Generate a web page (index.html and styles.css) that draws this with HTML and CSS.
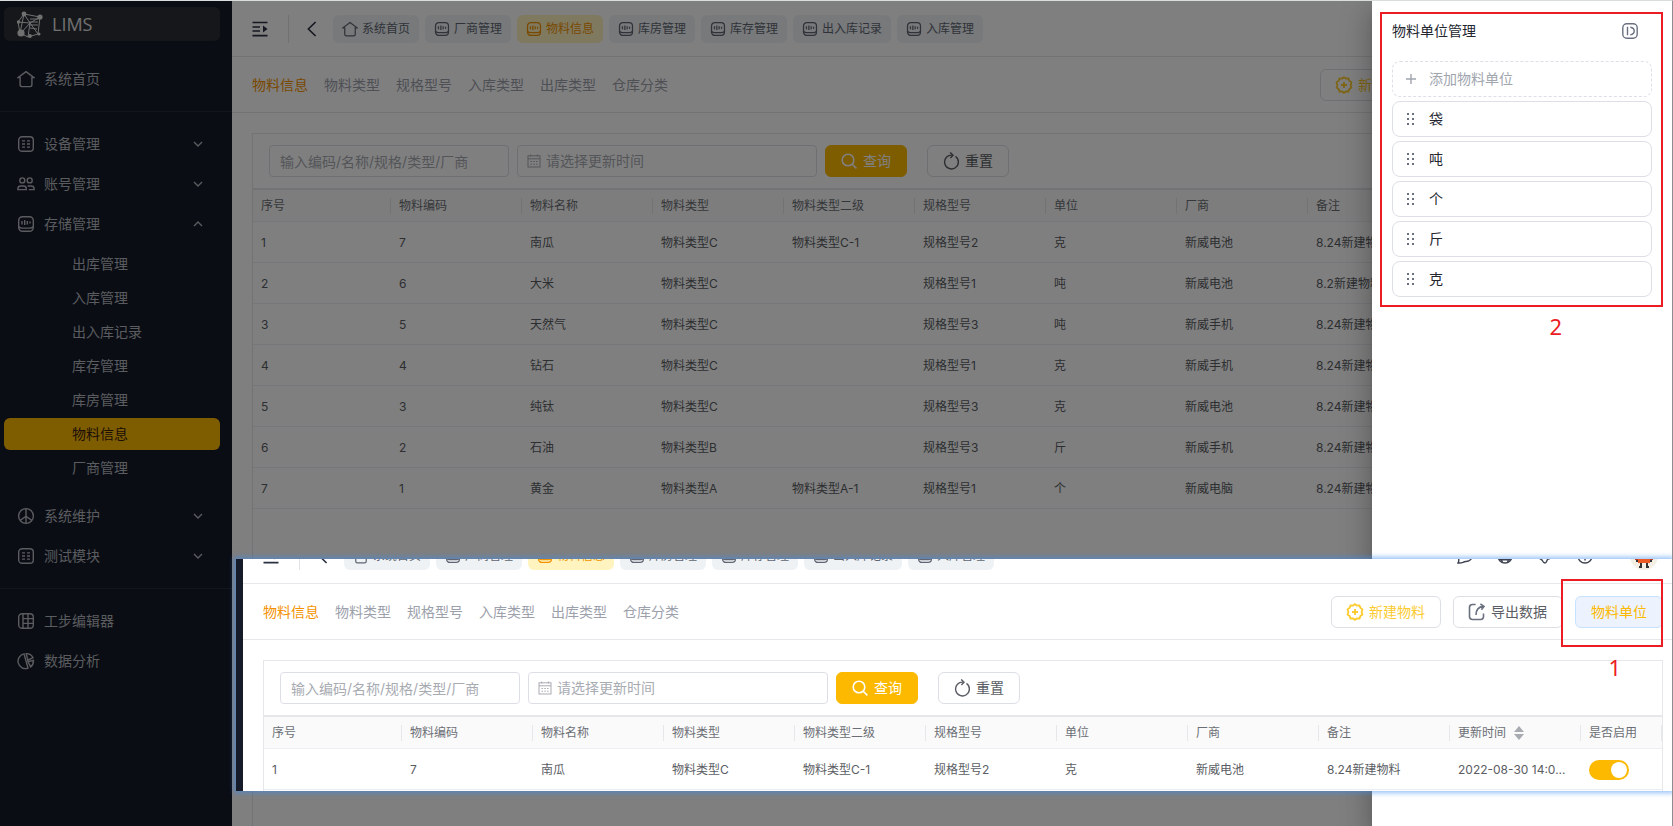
FILE: index.html
```html
<!DOCTYPE html>
<html lang="zh-CN">
<head>
<meta charset="utf-8">
<title>LIMS</title>
<link rel="stylesheet" href="styles.css">
</head>
<body>
<svg class="sprite" aria-hidden="true">
  <symbol id="i-home" viewBox="0 0 18 18"><path d="M9 1.6 17 7.6h-2.1v7.2a1.8 1.8 0 0 1-1.8 1.8H4.9a1.8 1.8 0 0 1-1.8-1.8V7.6H1z"/></symbol>
  <symbol id="i-grid" viewBox="0 0 18 18"><rect x="1.7" y="1.7" width="14.6" height="14.6" rx="3.4"/><path d="M5 5.9h3M10 5.9h3M5 9h3M10 9h3M5 12.1h3M10 12.1h3"/></symbol>
  <symbol id="i-users" viewBox="0 0 18 18"><circle cx="5.3" cy="5.4" r="2.5"/><circle cx="12.7" cy="5.4" r="2.5"/><path d="M.9 14.6v-.9c0-1.7 1.3-2.7 3-2.7h2.4c1.7 0 3 1 3 2.7v.9zM10.6 11h3.5c1.7 0 3 1 3 2.7v.9h-5.3"/></symbol>
  <symbol id="i-store" viewBox="0 0 18 18"><rect x="1.7" y="1.7" width="14.6" height="14.6" rx="3.8"/><path d="M2 11.6c.6 1 1.600 1.500 3 1.500h8c1.400 0 2.400-.5 3-1.500M5 6v3.400M7.700 5v5M10.300 6v3.400M13 6.600v2"/></symbol>
  <symbol id="i-wheel" viewBox="0 0 18 18"><circle cx="9" cy="9" r="7.4"/><path d="M9 1.6v14.8M9 9.2l-5.8 4.2M9 9.2l5.8 4.2"/></symbol>
  <symbol id="i-table" viewBox="0 0 18 18"><rect x="1.7" y="1.7" width="14.6" height="14.6" rx="3.4"/><path d="M6 2v14M11 2v14M6 6.6h10M6 11.4h10"/></symbol>
  <symbol id="i-pie" viewBox="0 0 18 18"><path d="M7 1.900A7.400 7.400 0 1 0 11 16.100zM9.200 1.600l1.600 6.600 5.200-2.600A7.400 7.400 0 0 0 9.200 1.600zM11 9.800l5.400-1.400c.2 2.500-.8 4.900-2.800 6.500z"/></symbol>
  <symbol id="i-down" viewBox="0 0 10 10"><path d="m1 3 4 4 4-4"/></symbol>
  <symbol id="i-up" viewBox="0 0 10 10"><path d="m1 7 4-4 4 4"/></symbol>
  <symbol id="i-menu" viewBox="0 0 16 16"><path d="M.5 1.5h15M.5 6h7.5M.5 10h7.5M.5 14.6h15"/><path class="solid" d="M11 4.6v6.8L15.6 8z"/></symbol>
  <symbol id="i-back" viewBox="0 0 10 16"><path d="M8.600 1 1.400 8l7.200 7"/></symbol>
  <symbol id="i-plus-badge" viewBox="0 0 18 18"><path d="M9 1.2 11 2.6l2.5-.1.8 2.3 2.1 1.5-.8 2.7.8 2.6-2.1 1.5-.8 2.4-2.5-.1-2 1.4-2-1.4-2.5.1-.8-2.4-2.1-1.5.8-2.6-.8-2.7 2.1-1.5.8-2.3 2.5.1zM9 6v6M6 9h6"/></symbol>
  <symbol id="i-export" viewBox="0 0 18 18"><path d="M7.6 1.5H4.4a2.9 2.9 0 0 0-2.9 2.9v9.2a2.9 2.9 0 0 0 2.9 2.9h8.2a2.9 2.9 0 0 0 2.9-2.9v-3M8 12c0-5 2-8.200 7.500-8.600M12.400 1l3.600 2.400-2.600 3.400"/></symbol>
  <symbol id="i-search" viewBox="0 0 16 16"><circle cx="7" cy="7" r="5.8"/><path d="m11.200 11.200 4.200 4.200"/></symbol>
  <symbol id="i-reset" viewBox="0 0 16 18"><path d="M12.500 4.400A6.900 6.900 0 1 1 9.500 3.200M7.200.4l2.800 2.800-2.600 2.700"/></symbol>
  <symbol id="i-date" viewBox="0 0 14 14"><rect x="1" y="1.800" width="12" height="11.200"/><path d="M1 4.800h12M3.600.5v2M10.400.5v2M3.500 7.500h1.500M6.300 7.500h1.500M9 7.500h1.500M3.500 10.200h1.500M6.300 10.200h1.500M9 10.200h1.500"/></symbol>
  <symbol id="i-collapse" viewBox="0 0 16 16"><rect x=".8" y=".8" width="14.400" height="14.400" rx="4"/><path d="M5.500 3.800v8.400M8.300 4.200c2.600.4 3.900 1.800 3.900 3.800s-1.300 3.400-3.900 3.800"/></symbol>
  <symbol id="i-drag" viewBox="0 0 8 12"><path class="solid" d="M0 0h2v2H0zM5 0h2v2H5zM0 5h2v2H0zM5 5h2v2H5zM0 10h2v2H0zM5 10h2v2H5z"/></symbol>
  <symbol id="i-plus" viewBox="0 0 10 10"><path d="M5 0v10M0 5h10"/></symbol>
  <symbol id="i-chat" viewBox="0 0 16 16"><path d="M1 15c1-1.500 1-3 .5-5C.8 4.500 4 1 8.500 1S15 4 15 7.500 12.500 13.500 9 13.500c-1.500 0-2 .2-3 .8-1.500.7-3 .9-5 .7z"/></symbol>
  <symbol id="i-globe" viewBox="0 0 16 16"><circle cx="8" cy="8" r="7"/><path d="M5 2c-1.200 3.800-1.200 8.200.4 12.400M11 2c1.200 3.800 1.200 8.200-.4 12.400M1 8h14M2 11.800h12"/></symbol>
  <symbol id="i-palette" viewBox="0 0 16 16"><path d="M8 15c-1.500 0-2-1-3-3-2-1-4-2-4-5 0-3.500 3-6 7-6s7 2.500 7 6c0 2.500-1.500 3.500-4 4.200-1.500.5-1 3.800-3 3.800z"/></symbol>
  <symbol id="i-info" viewBox="0 0 16 16"><circle cx="8" cy="8" r="7"/><path d="M8 4v5M8 11v1.500"/></symbol>
  <symbol id="i-logo" viewBox="0 0 28 28"><path d="m8 4 16 3-2 17-10 3-8-4L2 12zM8 4l6 9-12-1M24 7l-10 6-9 10M14 13l-2 14M14 13l8 11M8 4 4 23M14 9h8M13 12h9M13 15h9M14 18l7 1"/><g class="solid"><circle cx="8" cy="4" r="2.400"/><circle cx="24" cy="7" r="2.600"/><circle cx="5" cy="23" r="3.600"/><circle cx="14" cy="26" r="1.900"/><circle cx="23" cy="24" r="1.500"/><circle cx="2.500" cy="12" r="1.700"/></g></symbol>
</svg>

<div class="app">
  <nav class="sidebar">
    <a class="logo" href="#"><svg><use href="#i-logo"/></svg><span>LIMS</span></a>
    <div class="menu menu-first">
      <a class="item" href="#"><svg><use href="#i-home"/></svg><span>系统首页</span></a>
    </div>
    <div class="menu menu-main">
      <a class="item" href="#"><svg><use href="#i-grid"/></svg><span>设备管理</span><svg class="arrow"><use href="#i-down"/></svg></a>
      <a class="item" href="#"><svg><use href="#i-users"/></svg><span>账号管理</span><svg class="arrow"><use href="#i-down"/></svg></a>
      <a class="item" href="#"><svg><use href="#i-store"/></svg><span>存储管理</span><svg class="arrow"><use href="#i-up"/></svg></a>
      <div class="submenu">
        <a href="#">出库管理</a>
        <a href="#">入库管理</a>
        <a href="#">出入库记录</a>
        <a href="#">库存管理</a>
        <a href="#">库房管理</a>
        <a class="active" href="#">物料信息</a>
        <a href="#">厂商管理</a>
      </div>
      <a class="item" href="#"><svg><use href="#i-wheel"/></svg><span>系统维护</span><svg class="arrow"><use href="#i-down"/></svg></a>
      <a class="item" href="#"><svg><use href="#i-grid"/></svg><span>测试模块</span><svg class="arrow"><use href="#i-down"/></svg></a>
    </div>
    <div class="menu menu-last">
      <a class="item" href="#"><svg><use href="#i-table"/></svg><span>工步编辑器</span></a>
      <a class="item" href="#"><svg><use href="#i-pie"/></svg><span>数据分析</span></a>
    </div>
  </nav>

  <main class="main">
    <header class="topbar">
      <button class="icon-btn" aria-label="menu"><svg class="i-menu"><use href="#i-menu"/></svg></button>
      <span class="rule"></span>
      <button class="icon-btn" aria-label="back"><svg class="i-back"><use href="#i-back"/></svg></button>
      <div class="tabs">
        <a href="#"><svg><use href="#i-home"/></svg>系统首页</a>
        <a href="#"><svg><use href="#i-store"/></svg>厂商管理</a>
        <a class="active" href="#"><svg><use href="#i-store"/></svg>物料信息</a>
        <a href="#"><svg><use href="#i-store"/></svg>库房管理</a>
        <a href="#"><svg><use href="#i-store"/></svg>库存管理</a>
        <a href="#"><svg><use href="#i-store"/></svg>出入库记录</a>
        <a href="#"><svg><use href="#i-store"/></svg>入库管理</a>
      </div>
    </header>
    <div class="subbar">
      <div class="links">
        <a class="active" href="#">物料信息</a><a href="#">物料类型</a><a href="#">规格型号</a><a href="#">入库类型</a><a href="#">出库类型</a><a href="#">仓库分类</a>
      </div>
      <div class="actions">
        <button class="btn new"><svg><use href="#i-plus-badge"/></svg>新建物料</button>
        <button class="btn export"><svg><use href="#i-export"/></svg>导出数据</button>
        <button class="btn unit">物料单位</button>
      </div>
    </div>
    <section class="card">
      <form class="filters">
        <input class="field keyword" type="text" aria-label="关键字" placeholder="输入编码/名称/规格/类型/厂商">
        <label class="field date"><svg><use href="#i-date"/></svg><input type="text" placeholder="请选择更新时间"></label>
        <button class="btn search" type="button"><svg><use href="#i-search"/></svg>查询</button>
        <button class="btn reset" type="button"><svg><use href="#i-reset"/></svg>重置</button>
      </form>
      <table class="grid">
        <colgroup><col class="c-no"><col span="9"><col class="c-on"></colgroup>
        <thead><tr><th><div>序号</div></th><th><div>物料编码</div></th><th><div>物料名称</div></th><th><div>物料类型</div></th><th><div>物料类型二级</div></th><th><div>规格型号</div></th><th><div>单位</div></th><th><div>厂商</div></th><th><div>备注</div></th><th></th><th></th></tr></thead>
        <tbody>
          <tr><td>1</td><td>7</td><td>南瓜</td><td>物料类型C</td><td>物料类型C-1</td><td>规格型号2</td><td>克</td><td>新威电池</td><td>8.24新建物料</td><td></td><td></td></tr>
          <tr><td>2</td><td>6</td><td>大米</td><td>物料类型C</td><td></td><td>规格型号1</td><td>吨</td><td>新威电池</td><td>8.2新建物料</td><td></td><td></td></tr>
          <tr><td>3</td><td>5</td><td>天然气</td><td>物料类型C</td><td></td><td>规格型号3</td><td>吨</td><td>新威手机</td><td>8.24新建物料</td><td></td><td></td></tr>
          <tr><td>4</td><td>4</td><td>钻石</td><td>物料类型C</td><td></td><td>规格型号1</td><td>克</td><td>新威手机</td><td>8.24新建物料</td><td></td><td></td></tr>
          <tr><td>5</td><td>3</td><td>纯钛</td><td>物料类型C</td><td></td><td>规格型号3</td><td>克</td><td>新威电池</td><td>8.24新建物料</td><td></td><td></td></tr>
          <tr><td>6</td><td>2</td><td>石油</td><td>物料类型B</td><td></td><td>规格型号3</td><td>斤</td><td>新威手机</td><td>8.24新建物料</td><td></td><td></td></tr>
          <tr><td>7</td><td>1</td><td>黄金</td><td>物料类型A</td><td>物料类型A-1</td><td>规格型号1</td><td>个</td><td>新威电脑</td><td>8.24新建物料</td><td></td><td></td></tr>
        </tbody>
      </table>
    </section>
  </main>

  <div class="overlay"></div>

  <aside class="drawer">
    <header><h2>物料单位管理</h2><button class="icon-btn" aria-label="close"><svg><use href="#i-collapse"/></svg></button></header>
    <ul class="units">
      <li><button class="unit-row add"><svg><use href="#i-plus"/></svg>添加物料单位</button></li>
      <li class="unit-row"><svg class="drag"><use href="#i-drag"/></svg>袋</li>
      <li class="unit-row"><svg class="drag"><use href="#i-drag"/></svg>吨</li>
      <li class="unit-row"><svg class="drag"><use href="#i-drag"/></svg>个</li>
      <li class="unit-row"><svg class="drag"><use href="#i-drag"/></svg>斤</li>
      <li class="unit-row"><svg class="drag"><use href="#i-drag"/></svg>克</li>
    </ul>
  </aside>
</div>

<div class="snippet">
  <div class="snippet-page">
    <div class="strip"></div>
    <div class="main">
      <header class="topbar">
        <button class="icon-btn" aria-label="menu"><svg class="i-menu"><use href="#i-menu"/></svg></button>
        <span class="rule"></span>
        <button class="icon-btn" aria-label="back"><svg class="i-back"><use href="#i-back"/></svg></button>
        <div class="tabs">
          <a href="#"><svg><use href="#i-home"/></svg>系统首页</a>
          <a href="#"><svg><use href="#i-store"/></svg>厂商管理</a>
          <a class="active" href="#"><svg><use href="#i-store"/></svg>物料信息</a>
          <a href="#"><svg><use href="#i-store"/></svg>库房管理</a>
          <a href="#"><svg><use href="#i-store"/></svg>库存管理</a>
          <a href="#"><svg><use href="#i-store"/></svg>出入库记录</a>
          <a href="#"><svg><use href="#i-store"/></svg>入库管理</a>
        </div>
        <div class="tools">
          <svg><use href="#i-chat"/></svg><svg><use href="#i-globe"/></svg><svg><use href="#i-palette"/></svg><svg><use href="#i-info"/></svg>
          <svg class="avatar" viewBox="0 0 28 28"><circle cx="14" cy="14" r="14" fill="#f5f0e6"/><path fill="#ee5a24" d="M8 6h12v15H8z"/><path fill="#c0392b" d="M5 14h3v4H5zM20 14h3v4h-3z"/><path fill="#333" d="M6 18h2v2H6zM20 18h2v2h-2zM10 21h2v3h-2zM16 21h2v3h-2zM9 24h3v2H9zM16 24h3v2h-3z"/></svg>
        </div>
      </header>
      <div class="subbar">
        <div class="links">
          <a class="active" href="#">物料信息</a><a href="#">物料类型</a><a href="#">规格型号</a><a href="#">入库类型</a><a href="#">出库类型</a><a href="#">仓库分类</a>
        </div>
        <div class="actions">
          <button class="btn new"><svg><use href="#i-plus-badge"/></svg>新建物料</button>
          <button class="btn export"><svg><use href="#i-export"/></svg>导出数据</button>
          <button class="btn unit">物料单位</button>
        </div>
      </div>
      <section class="card">
        <form class="filters">
          <input class="field keyword" type="text" aria-label="关键字" placeholder="输入编码/名称/规格/类型/厂商">
          <label class="field date"><svg><use href="#i-date"/></svg><input type="text" placeholder="请选择更新时间"></label>
          <button class="btn search" type="button"><svg><use href="#i-search"/></svg>查询</button>
          <button class="btn reset" type="button"><svg><use href="#i-reset"/></svg>重置</button>
        </form>
        <table class="grid">
          <colgroup><col class="c-no"><col span="9"><col class="c-on"></colgroup>
          <thead><tr><th><div>序号</div></th><th><div>物料编码</div></th><th><div>物料名称</div></th><th><div>物料类型</div></th><th><div>物料类型二级</div></th><th><div>规格型号</div></th><th><div>单位</div></th><th><div>厂商</div></th><th><div>备注</div></th><th><div>更新时间<svg class="sort" viewBox="0 0 10 14"><path d="M5 0 10 6H0zM5 14 0 8h10z"/></svg></div></th><th><div>是否启用</div></th></tr></thead>
          <tbody>
            <tr><td>1</td><td>7</td><td>南瓜</td><td>物料类型C</td><td>物料类型C-1</td><td>规格型号2</td><td>克</td><td>新威电池</td><td>8.24新建物料</td><td>2022-08-30 14:0...</td><td><input class="switch" type="checkbox" aria-label="是否启用" checked></td></tr>
          </tbody>
        </table>
      </section>
    </div>
  </div>
</div>

<div class="mark mark-one"></div>
<span class="mark-label label-one">1</span>
<div class="mark mark-two"></div>
<span class="mark-label label-two">2</span>
</body>
</html>
```
FILE: styles.css
```css
* { box-sizing: border-box; }
body {
  margin: 0;
  position: relative;
  min-height: 100vh;
  overflow: hidden;
  border-top: 1px solid #d9dddb;
  border-right: 1px solid #8b8d90;
  background: #fff;
  color: #5a5d63;
  font: 14px/20px Inter, "Noto Sans CJK SC", sans-serif;
}
a { color: inherit; text-decoration: none; }
button, input { font: inherit; color: inherit; margin: 0; }
svg { width: 18px; height: 18px; flex: none; fill: none; stroke: currentColor; stroke-width: 1.4; }
.solid { fill: currentColor; stroke: none; }
.sprite { position: absolute; width: 0; height: 0; }

.app { position: relative; display: flex; min-height: calc(100vh - 1px); overflow: hidden; }

/* sidebar */
.sidebar { flex: none; width: 232px; background: #151a28; color: #b4b8be; }
.logo {
  display: flex; align-items: center; gap: 8px;
  height: 34px; margin: 6px 12px 0 4px; padding-left: 12px;
  border-radius: 6px; background: #2a2f36; color: #e0e0e0;
  font: 500 18px/24px "Open Sans", sans-serif;
}
.logo svg { width: 28px; height: 28px; stroke-width: 1; }
.menu { border-bottom: 1px solid #262b36; }
.menu-first { padding: 18px 0 12px; }
.menu-main { padding: 12px 0; }
.menu-last { padding: 12px 0; border: 0; }
.item { display: flex; align-items: center; gap: 9px; height: 40px; padding: 0 29px 0 17px; }
.arrow { width: 10px; height: 10px; margin-left: auto; }
.submenu { display: flex; flex-direction: column; gap: 2px; margin: 4px 12px 12px 4px; }
.submenu a { height: 32px; padding-left: 68px; line-height: 32px; border-radius: 6px; }
.submenu .active { background: #fcb900; color: #3b1c10; }

/* page */
.main { flex: 1; min-width: 0; display: flex; flex-direction: column; background: #fff; }
.topbar { display: flex; align-items: center; height: 56px; padding: 0 25px 0 20px; border-bottom: 1px solid #e5e7eb; flex: none; }
.icon-btn { display: flex; align-items: center; padding: 0; border: 0; background: none; color: #2b3042; }
.i-menu, .i-back { height: 16px; stroke-width: 1.6; }
.i-menu { width: 16px; }
.i-back { width: 10px; }
.rule { width: 1px; height: 28px; margin: 0 18px 0 20px; background: #e0e2e6; }
.tabs { display: flex; gap: 6px; margin-left: 16px; font-size: 12px; }
.tabs a {
  display: flex; align-items: center; gap: 4px; height: 28px; padding: 0 9px;
  border-radius: 6px; background: #eff2f5; color: #5f6672; white-space: nowrap;
}
.tabs svg { width: 16px; height: 16px; }
.tabs .active { background: #fff4bf; color: #f39200; }
.tools { display: flex; align-items: center; gap: 24px; margin-left: auto; color: #3d4250; }
.tools svg { width: 16px; height: 16px; }
.tools .avatar { width: 28px; height: 28px; margin-left: 13px; stroke: none; }

.subbar { display: flex; align-items: center; justify-content: space-between; height: 56px; padding: 0 20px; border-bottom: 1px solid #e5e7eb; flex: none; }
.links { display: flex; gap: 16px; color: #9ca0ab; }
.links .active { color: #f39200; }
.actions { display: flex; gap: 12px; }
.btn {
  display: flex; align-items: center; gap: 6px; height: 32px; padding: 0 15px;
  border: 1px solid #dcdfe6; border-radius: 6px; background: #fff; white-space: nowrap;
}
.new, .export { gap: 5px; padding: 0 15px 0 14px; }
.new { color: #fccb2e; }
.new svg { stroke-width: 1.8; }
.export svg { stroke-width: 1.6; color: #6b7080; }
.unit { background: #ecf3fe; border-color: #c6e2ff; color: #fcb900; }

.card { flex: 1; margin: 20px 20px 0; border: 1px solid #e5e7eb; border-bottom: 0; }
.filters { display: flex; align-items: center; gap: 8px; padding: 11px 16px; border-bottom: 1px solid #e5e7eb; }
.field { height: 32px; border: 1px solid #dcdfe6; border-radius: 4px; background: #fff; }
.keyword { width: 240px; padding: 0 10px; }
.date { display: flex; align-items: center; gap: 5px; width: 300px; padding: 0 9px; }
.date svg { width: 14px; height: 14px; stroke-width: 1; color: #a8abb2; }
.date input { flex: 1; min-width: 0; padding: 0; border: 0; background: none; }
input::placeholder { color: #a8abb2; opacity: 1; }
.search { background: #fcb900; border-color: #fcb900; color: #fff; }
.search svg { width: 16px; height: 16px; stroke-width: 1.6; }
.reset { margin-left: 12px; }
.reset svg { width: 16px; }

.grid { width: 100%; table-layout: fixed; border-collapse: separate; border-spacing: 0; font-size: 12px; line-height: 16px; border-top: 1px solid #e5e7eb; }
.c-no { width: 138px; }
.c-on { width: 81px; }
.grid th { height: 32px; padding: 0; background: #fafafa; border-bottom: 1px solid #ebeef5; font-weight: 400; text-align: left; color: #6b6e75; }
.grid th div { display: flex; align-items: center; gap: 8px; height: 16px; padding: 0 8px; border-right: 1px solid #e5e7eb; white-space: nowrap; }
.grid td { height: 41px; padding: 2px 8px 0; border-bottom: 1px solid #ebeef5; white-space: nowrap; }
.sort { width: 10px; height: 14px; fill: #a8abb2; stroke: none; }
.switch { appearance: none; display: block; width: 40px; height: 20px; padding: 2px; border-radius: 10px; background: #fcb900; }
.switch::before { content: ""; display: block; width: 16px; height: 16px; margin-left: auto; border-radius: 8px; background: #fff; }

/* drawer */
.overlay { position: absolute; inset: 0; background: rgba(0, 0, 0, 0.5); }
.drawer {
  position: absolute; top: 0; right: 0; bottom: 0; width: 300px; padding: 20px;
  background: #fff; color: #23262f;
  box-shadow: 0 8px 10px -5px rgba(0, 0, 0, 0.2), 0 16px 24px 2px rgba(0, 0, 0, 0.14), 0 6px 30px 5px rgba(0, 0, 0, 0.12);
}
.drawer header { display: flex; justify-content: space-between; padding-right: 14px; }
.drawer h2 { margin: 0; font-size: 14px; font-weight: 400; }
.drawer header svg { width: 16px; height: 16px; color: #6b7080; }
.units { display: flex; flex-direction: column; gap: 4px; margin: 20px 0 0; padding: 0; list-style: none; }
.unit-row {
  display: flex; align-items: center; gap: 13px; width: 100%; height: 36px; padding: 0 13px;
  border: 1px solid #dcdfe6; border-radius: 8px; background: #fff;
}
.unit-row svg { width: 10px; height: 10px; }
.unit-row .drag { height: 12px; color: #6b7080; }
.add { border-style: dashed; color: #a0a5ae; }

/* page strip laid over the window */
.snippet {
  position: absolute; left: 236px; right: 0; top: 558px; height: 232px; overflow: hidden;
  background: #fff;
  box-shadow: 0 0 5px 2px rgba(60, 140, 240, 0.55);
}
.snippet-page { display: flex; margin: -31px -11px 0 0; height: 300px; }
.strip { flex: none; width: 7px; background: #151b28; }

.mark { position: absolute; right: 9px; border: 2px solid #ec1c24; }
.mark-one { top: 578px; width: 102px; height: 68px; }
.mark-two { top: 11px; width: 283px; height: 295px; }
.mark-label { position: absolute; color: #ec1c24; font: 22px/24px "Noto Sans", sans-serif; }
.label-one { top: 654px; right: 51px; }
.label-two { top: 313px; right: 110px; }
```
